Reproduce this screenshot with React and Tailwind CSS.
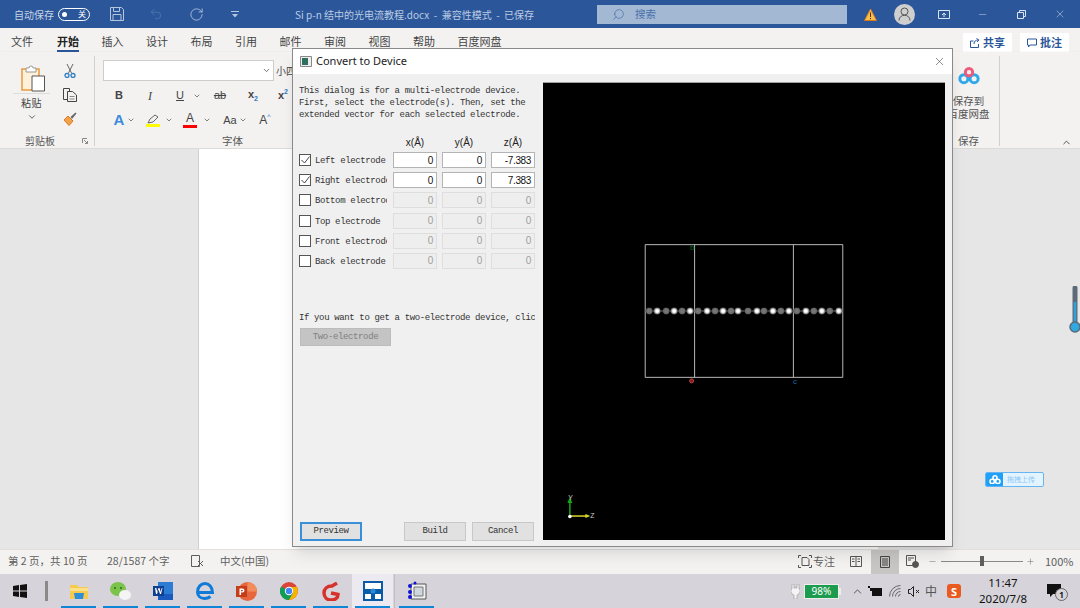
import React from 'react';
import { ChevronDown, ChevronUp, Minus, Plus, RotateCw, Search, Undo2, X } from 'lucide-react';

const TABS = ['文件', '开始', '插入', '设计', '布局', '引用', '邮件', '审阅', '视图', '帮助', '百度网盘'];

const ELECTRODES = [
    { name: 'Left electrode', on: true, z: '-7.383' },
    { name: 'Right electrode', on: true, z: '7.383' },
    { name: 'Bottom electrode', on: false, z: '0' },
    { name: 'Top electrode', on: false, z: '0' },
    { name: 'Front electrode', on: false, z: '0' },
    { name: 'Back electrode', on: false, z: '0' },
];

const ATOMS = [649, 657, 666, 674, 682, 690, 698, 707, 715, 723, 731, 738, 748, 757, 764, 773, 781, 789, 797, 806, 814, 822, 830, 839];

function BaiduCloud({ size = 24, plain = false }) {
    return (
        <svg width={size} height={size * 0.8} viewBox="0 0 30 24" fill="none" strokeWidth="4">
            <circle cx="8" cy="16" r="5.5" stroke={plain ? '#fff' : '#2fa8ea'} />
            <circle cx="22" cy="16" r="5.5" stroke={plain ? '#fff' : '#2fa8ea'} />
            <circle cx="15" cy="7" r="5" stroke={plain ? '#fff' : '#ee5a78'} />
        </svg>
    );
}

function TitleBar() {
    return (
        <div className="h-7 bg-[#2b579a] flex items-center text-[10px] text-[#c7d3e6] shrink-0">
            <span className="ml-[14px] w-[44px]">自动保存</span>
            <div className="w-8 h-[13px] rounded-full border border-white flex items-center justify-between px-[3px]">
                <span className="w-[5px] h-[5px] rounded-full bg-white" />
                <span className="text-[8px] leading-none text-white">关</span>
            </div>
            <svg className="ml-[20px]" width="14" height="14" viewBox="0 0 14 14" fill="none" stroke="#b6c6de">
                <path d="M.5.5h11l2 2v11H.5zM3.5.5v4h6v-4M3 13.5v-6h8v6" />
            </svg>
            <Undo2 className="ml-[25px] text-[#5a7cb2]" size={14} strokeWidth={1.2} />
            <RotateCw className="ml-[26px] text-[#c7d3e6]" size={15} strokeWidth={1.2} />
            <svg className="ml-[27px]" width="8" height="7" viewBox="0 0 8 7" fill="#b6c6de">
                <path d="M0 0h8v1H0zM1 3h6L4 6.500z" />
            </svg>
            <span className="ml-[56px] w-[300px] whitespace-nowrap text-[#bccbe2]">Si p-n 结中的光电流教程.docx &nbsp;-&nbsp; 兼容性模式 &nbsp;-&nbsp; 已保存</span>
            <div className="ml-[2px] w-[250px] h-[19px] bg-[#a3b8d3] flex items-center pl-[15px] text-[#4a71a8]">
                <Search size={13} strokeWidth={1.3} className="-scale-x-100" />
                <span className="ml-[10px] text-[10.5px]">搜索</span>
            </div>
            <svg className="ml-[17px]" width="13" height="13" viewBox="0 0 13 13">
                <path d="M6.500 1 12.500 12.500H.5z" fill="#f7c04a" stroke="#d87b1f" />
                <path d="M6.500 4.500v4.500M6.500 10v1.200" stroke="#53300c" />
            </svg>
            <div className="ml-[17px] w-[21px] h-[21px] rounded-full bg-[#cfcfcf] flex items-center justify-center">
                <svg width="13" height="14" viewBox="0 0 13 14" fill="none" stroke="#555">
                    <circle cx="6.500" cy="4.500" r="3.500" />
                    <path d="M1 13.500c0-7 11-7 11 0" />
                </svg>
            </div>
            <svg className="ml-[23px]" width="12" height="9" viewBox="0 0 12 9" fill="none" stroke="#dbe4f1">
                <path d="M.5.5h11v8H.5zM6 7V3M4 5l2-2 2 2" />
            </svg>
            <Minus className="ml-[27px] text-[#dbe4f1]" size={11} strokeWidth={1} />
            <svg className="ml-[29px]" width="9" height="9" viewBox="0 0 9 9" fill="none" stroke="#dbe4f1">
                <path d="M.5 2.500h6v6h-6zM2.500 2.500v-2h6v6h-2" />
            </svg>
            <X className="ml-[28px] text-[#dbe4f1]" size={12} strokeWidth={1} />
        </div>
    );
}

function TabBar() {
    return (
        <div className="h-6 bg-[#f3f2f1] flex items-end pl-[11px] text-[11px] text-[#444] shrink-0">
            <div className="flex gap-[22.5px]">
                {TABS.map((t) => (
                    <span key={t} className={t === '开始' ? 'ml-[1.5px] font-bold text-[#222] border-b-2 border-[#2b579a] leading-[16px] pb-px' : 'leading-[16px] pb-px border-b-2 border-transparent'}>
                        {t}
                    </span>
                ))}
            </div>
            <div className="ml-auto flex gap-[8px] pr-[11px] text-[#2b579a] font-bold">
                <div className="w-[49px] h-[19px] bg-white flex items-center justify-center gap-[3px]">
                    <svg width="10" height="10" viewBox="0 0 10 10" fill="none" stroke="#2b579a">
                        <path d="M3.500 3H.5v6.500h8V6M4 6c0-3 2-4 4-4M6.500.5l2.500 1.500L7 4" />
                    </svg>
                    共享
                </div>
                <div className="w-[49px] h-[19px] bg-white flex items-center justify-center gap-[3px]">
                    <svg width="10" height="10" viewBox="0 0 10 10" fill="none" stroke="#2b579a">
                        <path d="M.5 1h9v6H3L1.500 9V7h-1z" />
                    </svg>
                    批注
                </div>
            </div>
        </div>
    );
}

function Sep() {
    return <div className="w-px shrink-0 mt-[4px] mb-[2px] bg-[#d2d0ce]" />;
}

function ClipboardGroup() {
    return (
        <div className="w-[94px] shrink-0 flex flex-col">
            <div className="flex flex-1 pt-[12px]">
                <div className="ml-[13px] w-[37px] flex flex-col items-center text-[10px] text-[#444]">
                    <svg className="mt-px ml-[3px]" width="24" height="27" viewBox="0 0 24 27" fill="none">
                        <path d="M1 4h17v21H1z" fill="#fdf1dc" stroke="#e99a3c" strokeWidth="1.500" />
                        <path d="M5 3h3a2 2 0 0 1 4 0h3v4H5z" fill="#fff" stroke="#999" />
                        <path d="M11 11h12.500v15H11z" fill="#fff" stroke="#555" />
                    </svg>
                    <div className="w-full border-t border-[#dcdcdc] mt-[1px] pt-[1px] text-center leading-[16px] tracking-[0.5px]">粘贴</div>
                    <ChevronDown size={10} className="mt-px" />
                </div>
                <div className="ml-[12px] w-[16px] flex flex-col items-center gap-[10px]">
                    <svg width="14" height="14" viewBox="0 0 14 14" fill="none">
                        <path d="M4 0l4.500 9M10 0 5.500 9" stroke="#666" />
                        <circle cx="4" cy="11.500" r="2" stroke="#2f7fc4" strokeWidth="1.300" />
                        <circle cx="10" cy="11.500" r="2" stroke="#2f7fc4" strokeWidth="1.300" />
                    </svg>
                    <svg width="14" height="14" viewBox="0 0 14 14" fill="none" stroke="#444">
                        <path d="M4.500 11.500H.5V.5h6V3" />
                        <path d="M4.500 3.500h5l4 3.500v6.500h-9z" fill="#f3f2f1" />
                        <path d="M6.500 8.500h5M6.500 11h5" stroke="#888" />
                    </svg>
                    <svg width="14" height="14" viewBox="0 0 14 14">
                        <path d="M1 8l4-4 5 5-4 4.500z" fill="#f1a24a" stroke="#d87b1f" />
                        <path d="M7.500 5l5-4.500 1 1-4.500 5.500z" fill="#666" />
                    </svg>
                </div>
            </div>
            <div className="h-[15px] flex items-center text-[10px] text-[#555]">
                <span className="ml-[25px] w-[30px] whitespace-nowrap">剪贴板</span>
                <svg className="ml-[27px]" width="6" height="6" viewBox="0 0 6 6" fill="none" stroke="#888">
                    <path d="M.5 5V.5H5M2 2l3.500 3.500M3 5.500h2.500V3" />
                </svg>
            </div>
        </div>
    );
}

function FontGroup() {
    return (
        <div className="flex-1 flex flex-col pl-[8px] text-[#444] font-['Liberation_Sans',sans-serif]">
            <div className="pt-[8px] flex">
                <div className="w-[171px] h-[21px] bg-white border border-[#cfcdcb] flex items-center justify-end pr-[2px]">
                    <ChevronDown size={9} />
                </div>
                <span className="text-[10px] pl-[2px] pt-[3px] font-['Noto_Sans_CJK_SC',sans-serif]">小四</span>
            </div>
            <div className="flex items-center h-[21px] mt-[4px] text-[11px]">
                <span className="w-[16px] ml-[8px] text-center font-bold">B</span>
                <span className="w-[14px] ml-[16px] text-center italic font-['Liberation_Serif',serif] text-[12px]">I</span>
                <span className="w-[12px] ml-[17px] text-center underline">U</span>
                <ChevronDown size={8} className="ml-[7px]" />
                <span className="w-[16px] ml-[11px] text-center line-through">ab</span>
                <span className="w-[16px] ml-[17px] text-center font-bold">x<span className="text-[7px] text-[#2f7ac4] align-sub">2</span></span>
                <span className="w-[16px] ml-[14px] text-center font-bold">x<span className="text-[7px] text-[#2f7ac4] align-super">2</span></span>
            </div>
            <div className="flex items-center h-[24px] mt-[2px]">
                <span className="w-[14px] ml-[9px] text-center text-[15px] font-bold text-[#3b8bdc]">A</span>
                <ChevronDown size={8} className="ml-[1px]" />
                <div className="ml-[11px] flex flex-col items-center w-[14px]">
                    <svg width="12" height="10" viewBox="0 0 12 10" fill="none" stroke="#666">
                        <path d="M1 9 3 5l5-4 3 2-5 5z" />
                    </svg>
                    <span className="w-[14px] h-[3px] bg-[#ffff00]" />
                </div>
                <ChevronDown size={8} className="ml-[5px]" />
                <div className="ml-[10px] flex flex-col items-center w-[14px] text-[12px] leading-[11px]">
                    A
                    <span className="w-[14px] h-[3px] bg-[#ff0000] mt-[1px]" />
                </div>
                <ChevronDown size={8} className="ml-[6px]" />
                <span className="w-[16px] ml-[11px] text-center text-[11px]">Aa</span>
                <ChevronDown size={8} className="ml-[1px]" />
                <span className="w-[14px] ml-[11px] text-center text-[12px]">A<span className="text-[7px] text-[#2f7ac4] align-super">^</span></span>
            </div>
            <div className="mt-auto h-[15px] ml-[119px] flex items-center text-[10.5px] text-[#555] font-['Noto_Sans_CJK_SC',sans-serif]">字体</div>
        </div>
    );
}

function SaveGroup() {
    return (
        <div className="w-[64px] shrink-0 flex flex-col items-center pl-[3px] text-[10.5px] text-[#555] leading-[13px]">
            <div className="pt-[15px]">
                <BaiduCloud size={22} />
            </div>
            <div className="mt-[9px] text-center whitespace-nowrap">
                保存到
                <br />
                百度网盘
            </div>
            <div className="mt-auto h-[15px] flex items-center">保存</div>
        </div>
    );
}

function Ribbon() {
    return (
        <div className="h-[97px] bg-[#f3f2f1] flex shrink-0 border-b border-[#dcdad8] shadow-sm">
            <ClipboardGroup />
            <Sep />
            <FontGroup />
            <SaveGroup />
            <Sep />
            <div className="w-[80px] shrink-0 flex items-end justify-end pr-[8px]">
                <ChevronUp size={11} className="text-[#444]" />
            </div>
        </div>
    );
}

function Viewport() {
    return (
        <div className="flex-1 bg-black border-t border-[#a0a0a0]">
            <svg className="w-full h-full block" viewBox="543 82 402 458">
                <defs>
                    <radialGradient id="bright">
                        <stop offset="0.4" stopColor="#fff" />
                        <stop offset="1" stopColor="#555" />
                    </radialGradient>
                    <radialGradient id="dim">
                        <stop offset="0.3" stopColor="#777" />
                        <stop offset="0.8" stopColor="#666" />
                        <stop offset="1" stopColor="#333" />
                    </radialGradient>
                </defs>
                <path d="M645 244H843V377H645zM694.500 244V377M793.500 244V377" fill="none" stroke="#b8b8b8" />
                <path d="M645 310.500H843" stroke="#777" />
                {ATOMS.map((x, i) => (
                    <circle key={x} cx={x} cy="310.500" r="3.500" fill={i % 2 ? 'url(#bright)' : 'url(#dim)'} />
                ))}
                <text x="690" y="249" fontSize="8" fill="#0f6b14" fontFamily="Liberation Sans">b</text>
                <circle cx="691.500" cy="380.500" r="2" fill="#7a1f1f" stroke="#c04040" />
                <text x="793" y="384" fontSize="8" fill="#1b6aa8" fontFamily="Liberation Sans">c</text>
                <path d="M569.500 516V502" stroke="#16a516" strokeWidth="1.500" />
                <path d="M567 503l2.500-6 2.500 6z" fill="#16a516" />
                <path d="M570 516H586" stroke="#d9d92a" strokeWidth="1.500" />
                <path d="M585 514l5 2-5 2z" fill="#d9d92a" />
                <circle cx="569.500" cy="516.500" r="1.800" fill="#fff" />
                <text x="568" y="500" fontSize="7" fill="#ccc" fontFamily="Liberation Sans">Y</text>
                <text x="590" y="518" fontSize="7" fill="#ccc" fontFamily="Liberation Sans">Z</text>
            </svg>
        </div>
    );
}

function NumField({ value, on }) {
    return (
        <div className={`w-[44px] h-[16px] border flex items-center justify-end pr-[3px] text-[10px] font-['Liberation_Sans',sans-serif] ${on ? 'bg-white border-[#b4b4b4] text-[#111]' : 'bg-[#eeeeee] border-[#dedede] text-[#a0a0a0]'}`}>
            {value}
        </div>
    );
}

function DialogButton({ children, primary }) {
    return (
        <div className={`w-[62px] h-[19px] pt-px flex items-center justify-center bg-[#e1e1e1] border ${primary ? 'border-[#3b8fd8] border-2' : 'border-[#c8c8c8]'}`}>
            {children}
        </div>
    );
}

function ConvertDialog() {
    return (
        <div className="absolute left-[292px] top-[48px] w-[661px] h-[499px] bg-[#f0f0f0] border border-[#8a8a8a] shadow-lg flex flex-col">
            <div className="h-[25px] bg-white flex items-center pl-[7px] pr-[6px] shrink-0">
                <svg width="12" height="11" viewBox="0 0 12 11">
                    <path d="M.5.5h11v10H.5z" fill="#eee" stroke="#888" />
                    <path d="M2 2h6v7H2z" fill="#2f6f5f" />
                </svg>
                <span className="ml-[4px] text-[11px] text-[#222] font-['Noto_Sans',sans-serif]">Convert to Device</span>
                <X className="ml-auto text-[#333]" size={13} strokeWidth={1} />
            </div>
            <div className="flex-1 flex pt-[8px] pb-[6px] pr-[7px] min-h-0">
                <div className="w-[250px] shrink-0 pl-[6px] pr-[8px] flex flex-col font-['Liberation_Mono',monospace] text-[9px] tracking-[-0.37px] text-[#333]">
                    <p className="mt-[3px] leading-[12px] whitespace-nowrap">
                        This dialog is for a multi-electrode device.
                        <br />
                        First, select the electrode(s). Then, set the
                        <br />
                        extended vector for each selected electrode.
                    </p>
                    <div className="mt-[14px] h-[12px] flex justify-end gap-[5px] tracking-normal font-['Liberation_Sans',sans-serif] text-[10px] text-[#222]">
                        <span className="w-[44px] text-center">x(Å)</span>
                        <span className="w-[44px] text-center">y(Å)</span>
                        <span className="w-[44px] text-center">z(Å)</span>
                    </div>
                    <div className="mt-[5px] flex flex-col gap-[4.200px]">
                        {ELECTRODES.map((e) => (
                            <div key={e.name} className="h-4 flex items-center">
                                <div className="w-[12px] h-[12px] bg-white border border-[#555] flex items-center justify-center shrink-0">
                                    {e.on && (
                                        <svg width="9" height="8" viewBox="0 0 9 8" fill="none" stroke="#444">
                                            <path d="M.5 4l3 3 5-6.500" />
                                        </svg>
                                    )}
                                </div>
                                <span className="ml-[4px] h-4 leading-[19px] w-[72px] overflow-hidden whitespace-nowrap shrink-0">{e.name}</span>
                                <div className="ml-auto flex gap-[5px]">
                                    <NumField value="0" on={e.on} />
                                    <NumField value="0" on={e.on} />
                                    <NumField value={e.z} on={e.on} />
                                </div>
                            </div>
                        ))}
                    </div>
                    <p className="mt-[43px] leading-[12px] whitespace-nowrap overflow-hidden w-[236px]">If you want to get a two-electrode device, click</p>
                    <div className="mt-[4px] ml-px pt-px w-[91px] h-[18px] bg-[#c4c4c4] border border-[#bcbcbc] text-[#808080] flex items-center justify-center">Two-electrode</div>
                    <div className="mt-auto -mb-px ml-px mr-px flex items-center">
                        <DialogButton primary>Preview</DialogButton>
                        <div className="ml-auto flex gap-[6px]">
                            <DialogButton>Build</DialogButton>
                            <DialogButton>Cancel</DialogButton>
                        </div>
                    </div>
                </div>
                <Viewport />
            </div>
        </div>
    );
}

function DocArea() {
    return (
        <div className="flex-1 bg-[#e6e6e6] flex min-h-0 relative">
            <div className="ml-[198px] w-[680px] bg-white border-l border-[#d0d0d0]" />
            <div className="absolute left-[985px] top-[323px] w-[59px] h-[15px] rounded-[2px] border border-[#65b5f5] bg-[#e3f3ff] flex items-center overflow-hidden">
                <div className="w-[17px] h-full bg-[#22a0f5] flex items-center justify-center">
                    <BaiduCloud size={12} plain />
                </div>
                <span className="ml-[4px] text-[7px] text-[#8cc8f5]">拖拽上传</span>
            </div>
            <div className="absolute left-[1069px] top-[137px] w-[12px] h-[48px]">
                <svg width="12" height="48" viewBox="0 0 12 48">
                    <path d="M6 2v36" stroke="#5d6b78" strokeWidth="5" strokeLinecap="round" />
                    <path d="M6 16v24" stroke="#2fa0d8" strokeWidth="2.500" />
                    <circle cx="6" cy="41" r="5" fill="#30a8e0" stroke="#5d6b78" strokeWidth="1.500" />
                </svg>
            </div>
        </div>
    );
}

function StatusBar() {
    return (
        <div className="h-[25px] pb-[2px] bg-[#f3f2f1] flex items-center text-[10.5px] text-[#605e5c] shrink-0 border-t border-[#e1dfdd]">
            <span className="ml-[8px] w-[99px]">第 2 页，共 10 页</span>
            <span className="w-[84px]">28/1587 个字</span>
            <svg width="13" height="12" viewBox="0 0 13 12" fill="none" stroke="#605e5c">
                <path d="M.5.5h8v11h-8zM7 6l5 5M12 6l-5 5" />
            </svg>
            <span className="ml-[16px]">中文(中国)</span>
            <svg className="ml-auto" width="14" height="13" viewBox="0 0 14 13" fill="none" stroke="#555">
                <path d="M4 2.500h5l2 2v6H4zM.5 3V.5H3M13.500 3V.5H11M.5 10v2.500H3M13.500 10v2.500H11" />
            </svg>
            <span className="ml-px w-[28px] text-[11px]">专注</span>
            <svg className="ml-[9px]" width="12" height="11" viewBox="0 0 12 11" fill="none" stroke="#555">
                <path d="M.5.5h11v10H.5zM6 .5v10M2 3h2.500M2 5.500h2.500M7.500 3H10M7.500 5.500H10" />
            </svg>
            <div className="ml-[9px] w-[28px] self-stretch -mb-[2px] bg-[#c8c6c4] flex items-center justify-center">
                <svg width="10" height="12" viewBox="0 0 10 12" fill="none" stroke="#444">
                    <path d="M.5.5h9v11h-9zM2 3h6M2 5h6M2 7h6M2 9h6" />
                </svg>
            </div>
            <svg className="ml-[7px]" width="13" height="13" viewBox="0 0 13 13" fill="none" stroke="#555">
                <path d="M.5.5h9v10h-9zM2 3h6M2 5h3" />
                <circle cx="9.500" cy="9.500" r="3" fill="#555" />
            </svg>
            <Minus className="ml-[9px]" size={9} strokeWidth={1.2} />
            <div className="ml-[4px] w-[82px] h-px bg-[#8a8886] relative">
                <span className="absolute left-[39px] -top-[5px] w-[4px] h-[10px] bg-[#605e5c]" />
            </div>
            <Plus className="ml-[3px]" size={9} strokeWidth={1.2} />
            <span className="ml-[10px] w-[35px] text-[11px]">100%</span>
        </div>
    );
}

function AppCell({ children, active }) {
    return (
        <div className={`w-[41px] h-[34px] mr-px shrink-0 flex items-center justify-center relative ${active ? 'bg-[#eceaf0]' : ''}`}>
            {children}
            <span className="absolute bottom-0 left-[3px] right-[3px] h-[2px] bg-[#0f86d6]" />
        </div>
    );
}

function Taskbar() {
    return (
        <div className="h-[34px] bg-[#d6d4da] flex items-center shrink-0 text-[#111] font-['Noto_Sans',sans-serif]">
            <div className="w-[40px] flex justify-center">
                <svg width="14" height="14" viewBox="0 0 14 14" fill="#111">
                    <path d="M0 2l6-1v5.500H0zM7 1l7-1v6.500H7zM0 7.500h6V13l-6-1zM7 7.500h7V14l-7-1z" />
                </svg>
            </div>
            <div className="w-[3px] h-[20px] ml-[5px] mr-[10px] bg-[#8a8a8a]" />
            <AppCell>
                <svg width="20" height="17" viewBox="0 0 20 17">
                    <path d="M1 2h7l2 2h9v12H1z" fill="#f6c94f" />
                    <path d="M1 5h18v3H1z" fill="#fbe08a" />
                    <path d="M5 10h10l-1 6H6z" fill="#2f8ed8" />
                </svg>
            </AppCell>
            <AppCell>
                <svg width="21" height="19" viewBox="0 0 21 19">
                    <ellipse cx="8" cy="7" rx="8" ry="7" fill="#7bc34a" />
                    <ellipse cx="15" cy="13" rx="6" ry="5" fill="#f4f4f4" />
                    <circle cx="5" cy="6" r="1" fill="#2c6e1b" />
                    <circle cx="11" cy="6" r="1" fill="#2c6e1b" />
                </svg>
            </AppCell>
            <AppCell>
                <svg width="20" height="18" viewBox="0 0 20 18">
                    <path d="M5 0h15v18H5z" fill="#2b7cd3" />
                    <path d="M5 12h15v6H5z" fill="#185abd" />
                    <path d="M0 4h11v10H0z" fill="#103f91" />
                    <path d="M2 6h1.300l1 4 1.200-4h1l1.200 4 1-4H9.500L8 12H7L5.500 7.500 4 12H3z" fill="#fff" />
                </svg>
            </AppCell>
            <AppCell>
                <svg width="18" height="18" viewBox="0 0 18 18" fill="none">
                    <path d="M2 10.500h14.500C16.500 5 13 1.500 9 1.500 5 1.500 1.500 5 1.500 10c0 4 3 6.500 7 6.500 2.500 0 4.500-.8 6-2" stroke="#0f7ad8" strokeWidth="3" />
                </svg>
            </AppCell>
            <AppCell>
                <svg width="21" height="19" viewBox="0 0 21 19">
                    <circle cx="11.500" cy="9.500" r="9.500" fill="#e8663d" />
                    <path d="M11.500 0a9.500 9.500 0 0 1 9.500 9.500h-9.500z" fill="#f08d5b" />
                    <path d="M0 4h11v11H0z" fill="#c43e1c" />
                    <path d="M3.500 6.500h3a2 2 0 0 1 0 4H5V13H3.500zM5 8v1.200h1.300a.6.6 0 0 0 0-1.200z" fill="#fff" />
                </svg>
            </AppCell>
            <AppCell>
                <svg width="18" height="18" viewBox="0 0 18 18">
                    <circle cx="9" cy="9" r="9" fill="#db4437" />
                    <path d="M9 9 1.200 4.500A9 9 0 0 0 9 18l4-7z" fill="#0f9d58" />
                    <path d="M9 5h7.900A9 9 0 0 1 9 18l4-7z" fill="#f4b400" />
                    <circle cx="9" cy="9" r="4.200" fill="#fff" />
                    <circle cx="9" cy="9" r="3.200" fill="#4285f4" />
                </svg>
            </AppCell>
            <AppCell>
                <svg width="18" height="19" viewBox="0 0 18 19" fill="none">
                    <path d="M15 1 10 4C5 4 2 7 2 11s3 7 7 7 7-2 7-5.500L9 11" stroke="#d6322b" strokeWidth="3.500" />
                </svg>
            </AppCell>
            <AppCell active>
                <svg width="20" height="20" viewBox="0 0 20 20">
                    <path d="M0 0h20v20H0z" fill="#0a5cab" />
                    <path d="M2 2h16v6H11v3H9V8H2zM2 13h6v5H2zM12 13h6v5h-6z" fill="#fff" />
                    <circle cx="10" cy="10" r="2.500" fill="#2a8ad4" />
                </svg>
            </AppCell>
            <div className="w-[1px] h-[34px] bg-[#c0bfc4] mr-[1px]" />
            <AppCell>
                <svg width="20" height="20" viewBox="0 0 20 20">
                    <path d="M4 3h15v15H4z" fill="#f2f2f2" stroke="#555" />
                    <path d="M7 6h9v9H7z" fill="#cfd6de" stroke="#777" />
                    <circle cx="3" cy="5" r="2" fill="#1111dd" />
                    <circle cx="3" cy="11" r="2" fill="#1111dd" />
                    <circle cx="3" cy="16" r="2" fill="#1111dd" />
                    <circle cx="8" cy="2" r="1.500" fill="#1111dd" />
                </svg>
            </AppCell>
            <svg className="ml-auto" width="9" height="15" viewBox="0 0 9 15" fill="#f4f4f4" stroke="#8a8a8a" strokeWidth=".5">
                <path d="M1 0h2v4h3V0h2v5h1v3a4 4 0 0 1-3 3v4H3v-4A4 4 0 0 1 0 8V5h1z" />
            </svg>
            <div className="ml-[4px] w-[35px] h-[15px] border border-[#eee] bg-[#1d9c50] flex items-center justify-center text-[10px] text-white">98%</div>
            <span className="w-[2px] h-[7px] bg-[#eee] mr-[10px]" />
            <ChevronUp size={13} strokeWidth={1.2} />
            <svg className="ml-[4px]" width="14" height="10" viewBox="0 0 14 10">
                <path d="M0 0h2v2H0zM2 2h12v8H4V5H2z" fill="#111" />
            </svg>
            <svg className="ml-[7px]" width="13" height="12" viewBox="0 0 13 12" fill="none" stroke="#666">
                <path d="M.5 11.500a11 11 0 0 1 11-11M3.500 11.500a8 8 0 0 1 8-8M6.500 11.500a5 5 0 0 1 5-5M9.500 11.500a2 2 0 0 1 2-2" />
            </svg>
            <svg className="ml-[6px]" width="12" height="11" viewBox="0 0 12 11" fill="none" stroke="#222">
                <path d="M.5 3.500h2l3-3v10l-3-3h-2zM8 4l3 3M11 4 8 7" />
            </svg>
            <span className="ml-[5px] text-[12px] text-[#555] font-['Noto_Sans_CJK_SC',sans-serif]">中</span>
            <div className="ml-[10px] w-[14px] h-[14px] rounded-[3px] bg-[#ea5a1f] flex items-center justify-center text-[11px] font-bold text-white leading-none">S</div>
            <div className="ml-[15px] w-[54px] text-center text-[11.5px] leading-[16px] font-['Noto_Sans',sans-serif]">
                11:47
                <br />
                2020/7/8
            </div>
            <div className="ml-[17px] mr-[19px] relative w-[14px] h-[14px]">
                <svg width="14" height="14" viewBox="0 0 14 14" fill="#111">
                    <path d="M0 0h14v10H6l-3 3v-3H0z" />
                </svg>
                <span className="absolute -right-[7px] top-[4px] w-[13px] h-[13px] rounded-full border border-[#666] bg-[#d6d4da] text-[8px] font-bold flex items-center justify-center">1</span>
            </div>
        </div>
    );
}

export default function App() {
    return (
        <div className="w-[1080px] h-[608px] relative overflow-hidden flex flex-col font-['Noto_Sans_CJK_SC','Noto_Sans',sans-serif]">
            <TitleBar />
            <TabBar />
            <Ribbon />
            <DocArea />
            <StatusBar />
            <Taskbar />
            <ConvertDialog />
        </div>
    );
}
